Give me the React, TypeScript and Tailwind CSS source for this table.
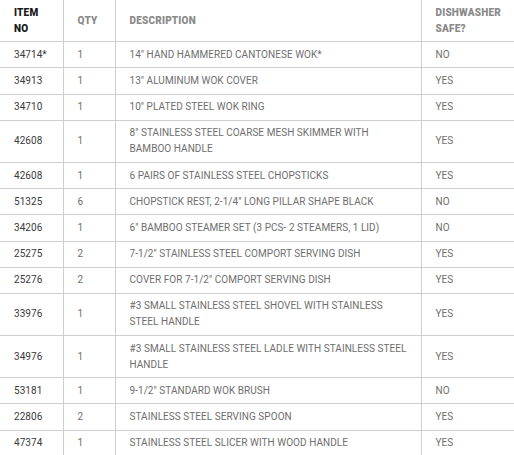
import React from "react";

type Row = { no: string; qty: string; desc: React.ReactNode; safe: string };

const rows: Row[] = [
  { no: "34714*", qty: "1", desc: "14\" HAND HAMMERED CANTONESE WOK*", safe: "NO" },
  { no: "34913", qty: "1", desc: "13\" ALUMINUM WOK COVER", safe: "YES" },
  { no: "34710", qty: "1", desc: "10\" PLATED STEEL WOK RING", safe: "YES" },
  { no: "42608", qty: "1", desc: <>8" STAINLESS STEEL COARSE MESH SKIMMER WITH<br />BAMBOO HANDLE</>, safe: "YES" },
  { no: "42608", qty: "1", desc: "6 PAIRS OF STAINLESS STEEL CHOPSTICKS", safe: "YES" },
  { no: "51325", qty: "6", desc: "CHOPSTICK REST, 2-1/4\" LONG PILLAR SHAPE BLACK", safe: "NO" },
  { no: "34206", qty: "1", desc: "6\" BAMBOO STEAMER SET (3 PCS- 2 STEAMERS, 1 LID)", safe: "NO" },
  { no: "25275", qty: "2", desc: "7-1/2\" STAINLESS STEEL COMPORT SERVING DISH", safe: "YES" },
  { no: "25276", qty: "2", desc: "COVER FOR 7-1/2\" COMPORT SERVING DISH", safe: "YES" },
  { no: "33976", qty: "1", desc: <>#3 SMALL STAINLESS STEEL SHOVEL WITH STAINLESS<br />STEEL HANDLE</>, safe: "YES" },
  { no: "34976", qty: "1", desc: <>#3 SMALL STAINLESS STEEL LADLE WITH STAINLESS STEEL<br />HANDLE</>, safe: "YES" },
  { no: "53181", qty: "1", desc: "9-1/2\" STANDARD WOK BRUSH", safe: "NO" },
  { no: "22806", qty: "2", desc: "STAINLESS STEEL SERVING SPOON", safe: "YES" },
  { no: "47374", qty: "1", desc: "STAINLESS STEEL SLICER WITH WOOD HANDLE", safe: "YES" },
];

export default function App() {
  const cell = "py-[4.6px] pl-[14px] pr-1 align-middle border-b border-[#cfcfcf] whitespace-nowrap";
  return (
    <div className="w-[514px] h-[455px] overflow-hidden bg-white" style={{ fontFamily: "Roboto, 'Liberation Sans', sans-serif" }}>
      <table className="w-[514px] table-fixed border-collapse text-[10px] leading-[16px] tracking-[0.05px]">
        <colgroup>
          <col className="w-[63px]" />
          <col className="w-[52px]" />
          <col className="w-[306px]" />
          <col className="w-[93px]" />
        </colgroup>
        <thead>
          <tr className="text-left">
            <th className={`${cell} border-r text-[#1a1a1a] font-black tracking-[0.2px]`}>ITEM<br />NO</th>
            <th className={`${cell} border-r text-[#8a8a8a] font-black tracking-[0.2px]`}>QTY</th>
            <th className={`${cell} border-r text-[#8a8a8a] font-black tracking-[0.2px]`}>DESCRIPTION</th>
            <th className={`${cell} text-[#8a8a8a] font-black tracking-[0.2px]`}>DISHWASHER<br />SAFE?</th>
          </tr>
        </thead>
        <tbody>
          {rows.map((r, i) => (
            <tr key={i}>
              <td className={`${cell} border-r text-[#3a3a3a]`}>{r.no}</td>
              <td className={`${cell} border-r text-[#6e6e6e]`}>{r.qty}</td>
              <td className={`${cell} border-r text-[#6e6e6e]`}>{r.desc}</td>
              <td className={`${cell} text-[#6e6e6e]`}>{r.safe}</td>
            </tr>
          ))}
        </tbody>
      </table>
    </div>
  );
}
